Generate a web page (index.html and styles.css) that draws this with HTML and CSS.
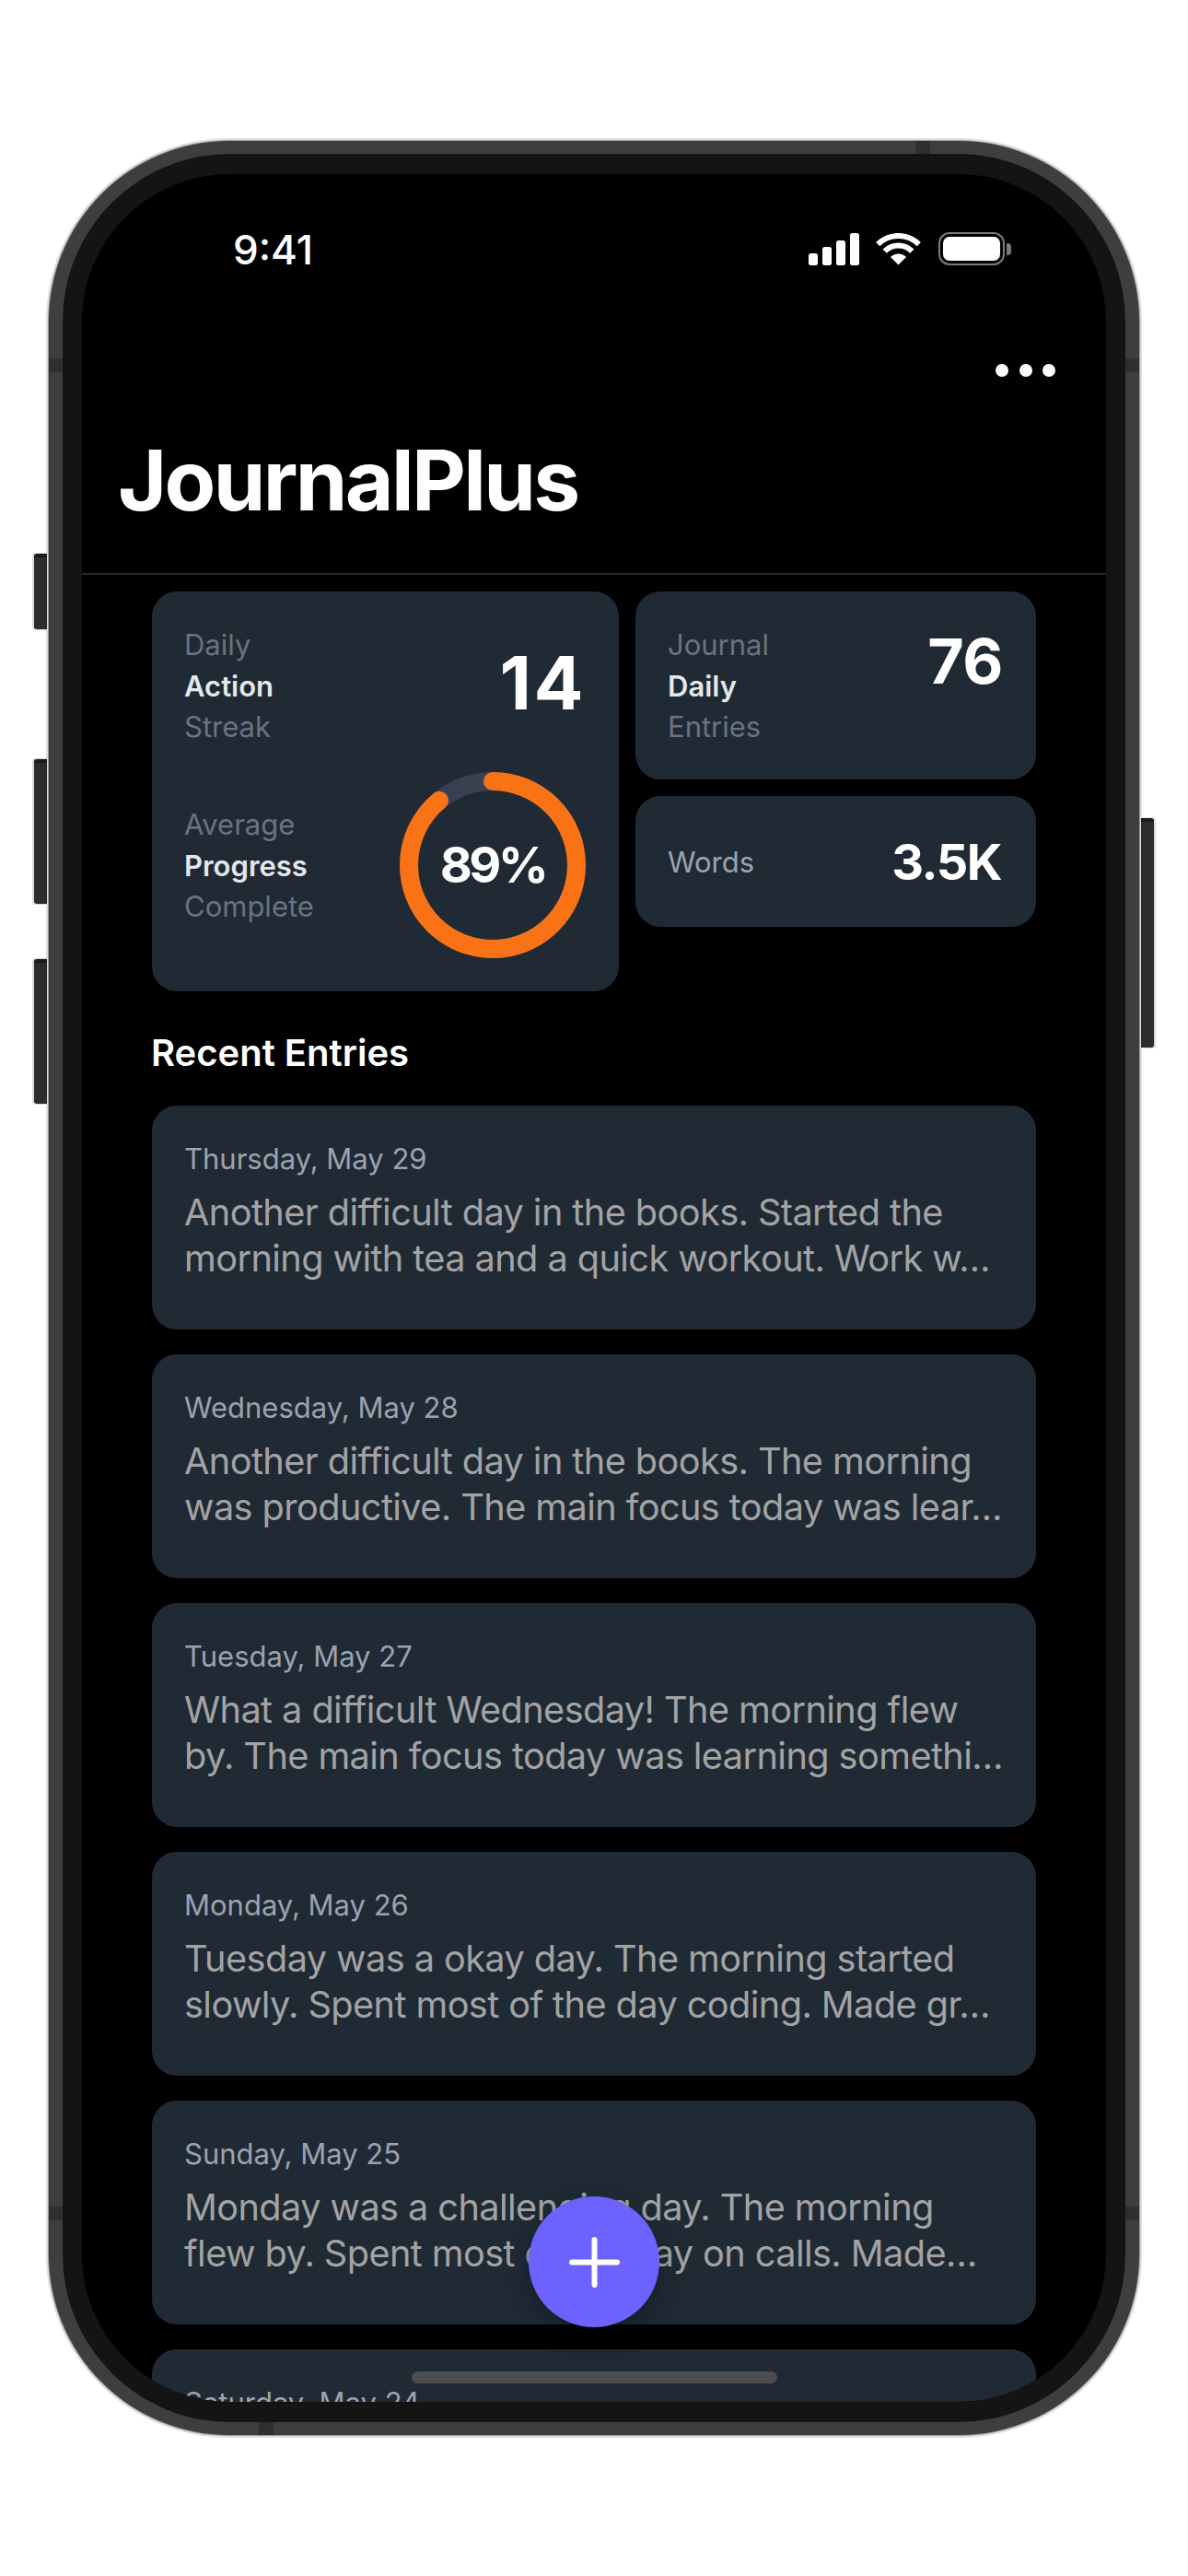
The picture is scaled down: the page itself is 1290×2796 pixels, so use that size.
FILE: index.html
```html
<!DOCTYPE html>
<html lang="en">
<head>
<meta charset="utf-8">
<title>JournalPlus</title>
<link rel="stylesheet" href="styles.css">
</head>
<body>
<div class="phone">
  <span class="side-btn btn-a"></span>
  <span class="side-btn btn-b"></span>
  <span class="side-btn btn-c"></span>
  <span class="side-btn btn-power"></span>
  <span class="band band-lt"></span>
  <span class="band band-rt"></span>
  <span class="band band-lb"></span>
  <span class="band band-rb"></span>
  <span class="band-h band-top"></span>
  <span class="band-h band-bottom"></span>
  <div class="bezel">
    <div class="screen">
      <header class="header">
        <div class="status">
          <span class="time">9:41</span>
          <div class="status-icons">
            <div class="signal"><i class="s1"></i><i class="s2"></i><i class="s3"></i><i class="s4"></i></div>
            <svg class="wifi" viewBox="0 0 49 35" width="49" height="35" aria-hidden="true">
              <path d="M2.2 12.2A31.5 31.5 0 0 1 46.8 12.2" fill="none" stroke="#fff" stroke-width="6"/>
              <path d="M9.65 19.65A21 21 0 0 1 39.35 19.65" fill="none" stroke="#fff" stroke-width="6"/>
              <path d="M24.5 34.5L16 26A12 12 0 0 1 33 26Z" fill="#fff"/>
            </svg>
            <div class="battery"><div class="battery-fill"></div></div>
            <span class="battery-nub"></span>
          </div>
        </div>
        <div class="more"><i></i><i></i><i></i></div>
        <h1 class="title">JournalPlus</h1>
      </header>
      <main class="content">
        <section class="stats">
          <div class="card card-big">
            <div class="stat-row stat-top">
              <div class="label"><span>Daily</span><b>Action</b><span>Streak</span></div>
              <div class="num-xl">14</div>
            </div>
            <div class="stat-row stat-bottom">
              <div class="label"><span>Average</span><b>Progress</b><span>Complete</span></div>
              <div class="ring">
                <svg viewBox="0 0 202 202" width="202" height="202" aria-hidden="true">
                  <circle cx="101" cy="101" r="91" fill="none" stroke="#374151" stroke-width="20"/>
                  <circle cx="101" cy="101" r="91" fill="none" stroke="#f97316" stroke-width="20" stroke-linecap="round" pathLength="100" stroke-dasharray="89 100" transform="rotate(-90 101 101)"/>
                </svg>
                <span class="ring-text">89%</span>
              </div>
            </div>
          </div>
          <div class="stats-side">
            <div class="card card-entries">
              <div class="label"><span>Journal</span><b>Daily</b><span>Entries</span></div>
              <div class="num-lg">76</div>
            </div>
            <div class="card card-words">
              <span class="words">Words</span>
              <div class="num-md">3.5K</div>
            </div>
          </div>
        </section>
        <h2 class="section-title">Recent Entries</h2>
        <section class="entries">
          <article class="entry">
            <div class="date">Thursday, May 29</div>
            <p class="body">Another difficult day in the books. Started the<br>morning with tea and a quick workout. Work w…</p>
          </article>
          <article class="entry">
            <div class="date">Wednesday, May 28</div>
            <p class="body">Another difficult day in the books. The morning<br>was productive. The main focus today was lear…</p>
          </article>
          <article class="entry">
            <div class="date">Tuesday, May 27</div>
            <p class="body">What a difficult Wednesday! The morning flew<br>by. The main focus today was learning somethi…</p>
          </article>
          <article class="entry">
            <div class="date">Monday, May 26</div>
            <p class="body">Tuesday was a okay day. The morning started<br>slowly. Spent most of the day coding. Made gr…</p>
          </article>
          <article class="entry">
            <div class="date">Sunday, May 25</div>
            <p class="body">Monday was a challenging day. The morning<br>flew by. Spent most of the day on calls. Made…</p>
          </article>
          <article class="entry">
            <div class="date">Saturday, May 24</div>
          </article>
        </section>
      </main>
      <button class="fab" type="button" aria-label="New entry">
        <svg viewBox="0 0 55 55" width="55" height="55" aria-hidden="true"><path d="M27.5 3V52M3 27.5H52" fill="none" stroke="#fff" stroke-width="6" stroke-linecap="round"/></svg>
      </button>
      <span class="home-indicator"></span>
    </div>
  </div>
</div>
</body>
</html>
```

FILE: styles.css
```css
* { box-sizing: border-box; }
html, body { margin: 0; padding: 0; background: #fff; }
body {
  width: 1290px;
  height: 2796px;
  overflow: hidden;
  padding: 153px 53px 0;
  font-family: Inter, "Liberation Sans", sans-serif;
}
.phone {
  position: relative;
  width: 1184px;
  height: 2490px;
  padding: 14px 15px;
  background: #3e3e3e;
  border-radius: 196px;
  box-shadow: 0 0 0 1px #9a9a9a, 0 0 0 3px #dedede;
}
.bezel {
  height: 100%;
  padding: 22px 21px;
  background: #141414;
  border-radius: 182px;
}
.screen {
  position: relative;
  height: 100%;
  background: #000;
  border-radius: 160px;
  overflow: hidden;
  color: #fff;
}
.side-btn {
  position: absolute;
  width: 13.5px;
  background: #2c2c2c;
  border-top: 4px solid #1b1b1b;
  border-radius: 3px 0 0 3px;
  box-shadow: -1px 0 0 1px #dadada;
}
.btn-a { left: -16px; top: 448px; height: 82px; }
.btn-b { left: -16px; top: 671px; height: 157px; }
.btn-c { left: -16px; top: 888px; height: 157px; }
.btn-power { right: -15.5px; top: 735px; height: 249px; border-radius: 0 3px 3px 0; box-shadow: 1px 0 0 1px #dadada; }
.band { position: absolute; width: 15px; height: 15px; background: #2f2f2f; }
.band-lt { left: 0; top: 236px; }
.band-rt { right: 0; top: 236px; }
.band-lb { left: 0; top: 2242px; }
.band-rb { right: 0; top: 2242px; }
.band-h { position: absolute; width: 16px; height: 14px; background: #2f2f2f; }
.band-top { left: 941px; top: 0; }
.band-bottom { left: 228px; bottom: 0; }

.header { border-bottom: 2px solid #262626; height: 435px; }
.status {
  display: flex;
  justify-content: space-between;
  align-items: center;
  height: 99px;
  padding: 63px 103px 0 164px;
}
.time { margin-top: 2px; font-size: 44px; font-weight: 500; line-height: 36px; }
.status-icons { display: flex; align-items: center; height: 36px; }
.signal { display: flex; align-items: flex-end; gap: 5px; height: 35px; margin-right: 18px; }
.signal i { display: block; width: 10px; background: #fff; border-radius: 2.5px; }
.s1 { height: 13px; }
.s2 { height: 20px; }
.s3 { height: 27px; }
.s4 { height: 35px; }
.wifi { display: block; margin-right: 19px; }
.battery {
  width: 72px;
  height: 36px;
  padding: 3px;
  border: 2px solid #7a7a7a;
  border-radius: 12px;
}
.battery-fill { height: 100%; background: #fff; border-radius: 7px; }
.battery-nub { width: 5px; height: 13px; margin-left: 2px; background: #7a7a7a; border-radius: 0 4px 4px 0; }
.more { display: flex; justify-content: flex-end; gap: 11.5px; margin-top: 107px; padding-right: 55px; }
.more i { display: block; width: 14px; height: 14px; border-radius: 50%; background: #fff; }
.title {
  margin: 57px 0 0;
  padding-left: 39px;
  font-size: 91px;
  font-weight: 700;
  line-height: 110px;
  letter-spacing: -2.65px;
}

.content { padding: 18px 76px 0; }
.stats { display: grid; grid-template-columns: 507px 435px; gap: 18px; align-items: start; }
.stats-side { display: flex; flex-direction: column; gap: 18px; }
.card { background: #1f2a35; border-radius: 27px; }
.card-big { height: 434px; padding: 36px 36px 0 35px; }
.stat-row { display: flex; justify-content: space-between; }
.stat-top { align-items: flex-start; height: 134px; margin-bottom: 26px; }
.stat-bottom { align-items: center; }
.stat-bottom .label { margin-top: 2px; }
.label { display: flex; flex-direction: column; font-size: 31px; line-height: 44.6px; color: #6b7280; }
.label b { font-weight: 600; color: #e5e7eb; }
.num-xl { margin-top: 14px; font-size: 80px; font-weight: 700; line-height: 97px; letter-spacing: 2.5px; }
.ring { position: relative; width: 202px; height: 202px; }
.ring svg { display: block; }
.ring-text { position: absolute; left: 0; right: 0; top: 0; line-height: 202px; text-align: center; font-size: 54px; font-weight: 700; letter-spacing: -3.5px; }
.card-entries { display: flex; justify-content: space-between; align-items: flex-start; height: 204px; padding: 36px 36px 0 35px; }
.num-lg { margin-top: -2px; font-size: 68px; font-weight: 700; line-height: 82px; letter-spacing: -0.5px; }
.card-words { display: flex; justify-content: space-between; align-items: center; height: 142px; padding: 0 36px 0 35px; }
.words { font-size: 31px; color: #9ca3af; }
.num-md { margin-right: 2px; font-size: 54px; font-weight: 700; letter-spacing: -1.5px; }
.section-title { margin: 43px 0 0 -1px; font-size: 40px; font-weight: 600; line-height: 48px; height: 81px; }
.entries { display: flex; flex-direction: column; gap: 27px; }
.entry { flex: none; height: 243px; padding: 39px 36px 0 35px; background: #1f2a35; border-radius: 27px; }
.date { font-size: 31px; line-height: 38px; color: #9ca3af; }
.body {
  margin: 14px 0 0;
  font-size: 39.7px;
  line-height: 50px;
  letter-spacing: -0.58px;
  color: #a3a3a3;
  white-space: nowrap;
}
.fab {
  position: absolute;
  left: 485px;
  top: 2195px;
  width: 142px;
  height: 142px;
  padding: 0;
  border: 0;
  border-radius: 50%;
  background: #6c63ff;
  box-shadow: 0 11px 28px rgba(0, 0, 0, 0.3);
  display: flex;
  align-items: center;
  justify-content: center;
}
.fab svg { display: block; }
.home-indicator {
  position: absolute;
  left: 358px;
  top: 2385px;
  width: 397px;
  height: 13px;
  border-radius: 7px;
  background: #4d4d4d;
}
```
